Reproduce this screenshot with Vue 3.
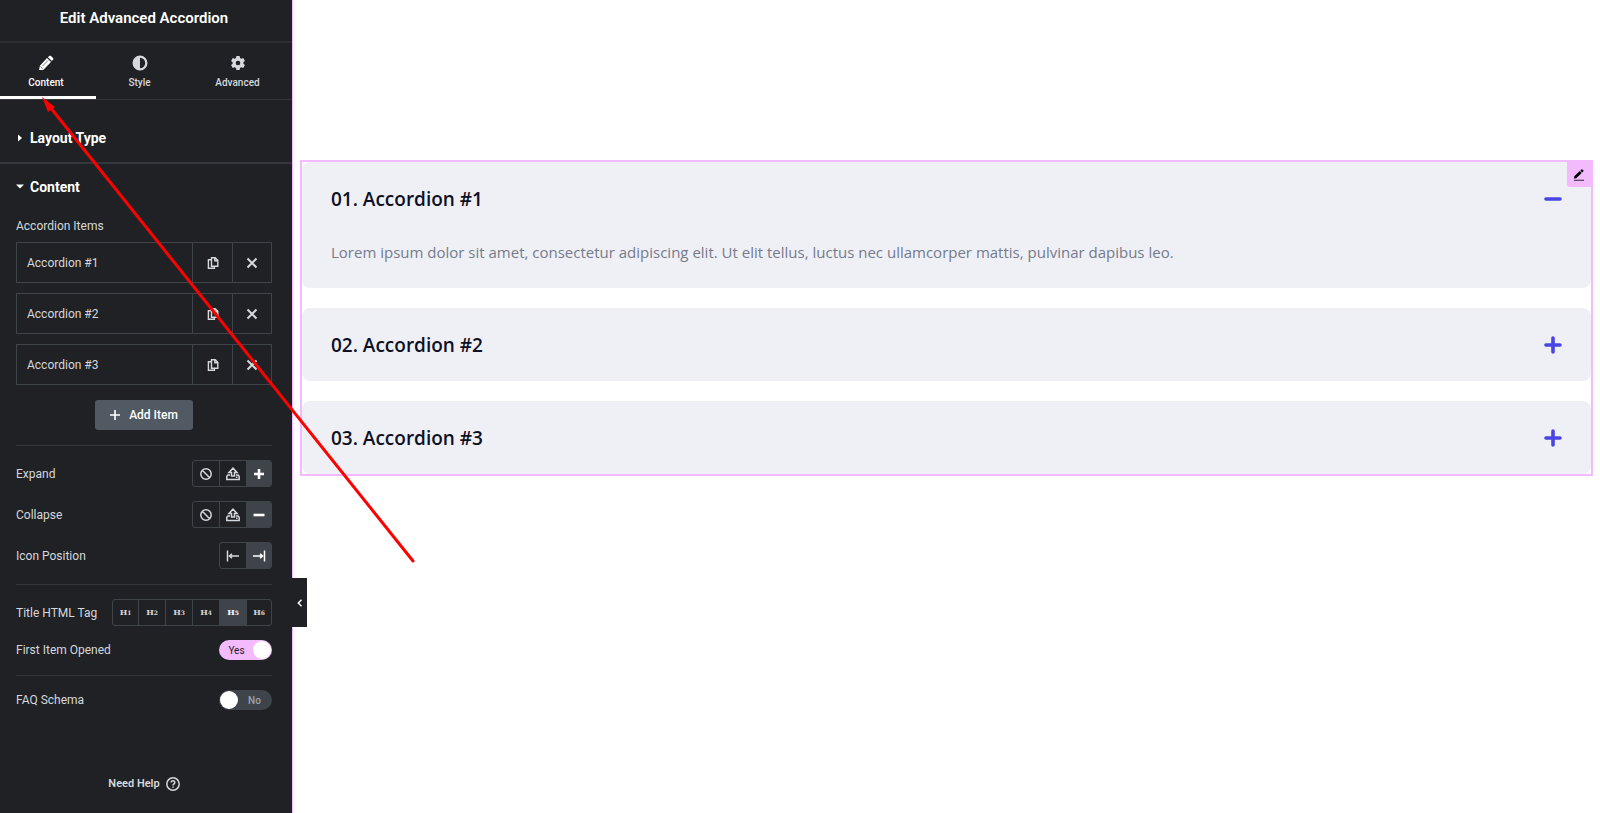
<template>
  <div class="editor">
    <aside class="panel">
      <header class="panel-header">
        <h1>Edit Advanced Accordion</h1>
      </header>

      <nav class="tabs">
        <button
          v-for="tab in tabs"
          :key="tab"
          type="button"
          class="tab"
          :class="{ active: activeTab === tab }"
          @click="activeTab = tab"
        >
          <svg v-if="tab === 'Content'" class="tab-icon" viewBox="0 0 16 16">
            <path d="M1 15l.9-4.200L9 3l4 4-7.800 7.900zM9.900 2.200l1.300-1.200c.5-.5 1.300-.5 1.800 0l2 2c.5.5.5 1.300 0 1.800l-1.200 1.300z" />
            <path class="cut" d="M4.500 11l5.500-5.500M2.500 11.500l2.200 2.200" />
          </svg>
          <svg v-else-if="tab === 'Style'" class="tab-icon" viewBox="0 0 16 16">
            <path fill-rule="evenodd" d="M8 .5a7.500 7.500 0 1 0 0 15 7.500 7.500 0 0 0 0-15zm0 2.300v10.400A5.200 5.200 0 0 0 8 2.800z" />
          </svg>
          <svg v-else class="tab-icon" viewBox="0 0 16 16">
            <path
              fill-rule="evenodd"
              d="M6.400 1h3.200l.4 2 1.300.8 2-.7 1.600 2.800L13.400 7.200v1.600l1.500 1.300-1.600 2.800-2-.7-1.300.8-.4 2H6.400l-.4-2-1.300-.8-2 .7-1.600-2.800 1.500-1.300V7.200L1.100 5.900l1.600-2.800 2 .7L6 3zM8 5.700a2.300 2.300 0 1 0 0 4.600 2.300 2.300 0 0 0 0-4.600z"
            />
          </svg>
          <span>{{ tab }}</span>
        </button>
      </nav>

      <section class="section section-closed">
        <button type="button" class="section-title">
          <svg class="caret" viewBox="0 0 8 8"><path d="M2 .5l4 3.500-4 3.500z" /></svg>
          Layout Type
        </button>
      </section>

      <section class="section">
        <button type="button" class="section-title">
          <svg class="caret" viewBox="0 0 8 8"><path d="M0 1.500h8L4 5.500z" /></svg>
          Content
        </button>

        <div class="controls">
          <p class="items-label">Accordion Items</p>
          <div class="repeater">
            <div v-for="item in items" :key="item.title" class="repeater-row">
              <button type="button" class="row-title">{{ item.title }}</button>
              <button type="button" class="row-tool" aria-label="Duplicate">
                <svg class="tool-icon" viewBox="0 0 12 12">
                  <path d="M4.500 .8h3.700l2.600 2.600v5.800H4.500zM7.800 1v2.800h2.800M4 2.800H1.400v8.400h6V9.500" />
                </svg>
              </button>
              <button type="button" class="row-tool" aria-label="Remove">
                <svg class="tool-icon cross" viewBox="0 0 12 12"><path d="M1.500 1.500l9 9M10.500 1.500l-9 9" /></svg>
              </button>
            </div>
          </div>
          <button type="button" class="add-item">
            <svg viewBox="0 0 10 10"><path d="M5 0v10M0 5h10" /></svg>
            Add Item
          </button>

          <div class="group">
            <div v-for="choice in choices" :key="choice.label" class="control" role="radiogroup" :aria-label="choice.label">
              <span class="control-label">{{ choice.label }}</span>
              <div class="choices">
                <label v-for="icon in choice.options" :key="icon" class="choice">
                  <input v-model="choice.value" type="radio" :name="choice.label" :value="icon" :aria-label="icon" />
                  <svg class="choice-icon" viewBox="0 0 14 14">
                    <path :class="{ heavy: icon === 'plus' || icon === 'minus' }" :d="iconPaths[icon]" />
                  </svg>
                </label>
              </div>
            </div>
          </div>

          <div class="group">
            <div class="control" role="radiogroup" aria-label="Title HTML Tag">
              <span class="control-label">Title HTML Tag</span>
              <div class="choices">
                <label v-for="n in 6" :key="n" class="choice heading">
                  <input v-model="titleTag" type="radio" name="title-tag" :value="n" />
                  H<small>{{ n }}</small>
                </label>
              </div>
            </div>
            <label class="control">
              <span class="control-label">First Item Opened</span>
              <span class="switch">
                <input v-model="firstOpened" type="checkbox" />
                <span class="switch-text">{{ firstOpened ? 'Yes' : 'No' }}</span>
                <span class="knob"></span>
              </span>
            </label>
          </div>

          <div class="group">
            <label class="control">
              <span class="control-label">FAQ Schema</span>
              <span class="switch">
                <input v-model="faqSchema" type="checkbox" />
                <span class="switch-text">{{ faqSchema ? 'Yes' : 'No' }}</span>
                <span class="knob"></span>
              </span>
            </label>
          </div>
        </div>
      </section>

      <a href="#" class="help">
        Need Help
        <svg viewBox="0 0 14 14">
          <circle cx="7" cy="7" r="6.200" />
          <path d="M5.200 5.500c0-2.400 3.600-2.300 3.600 0C8.800 6.800 7 6.900 7 8.400M7 9.600v1.200" />
        </svg>
      </a>

      <button type="button" class="collapse-panel" aria-label="Hide panel">
        <svg viewBox="0 0 8 8"><path d="M5.500 .8L2.300 4l3.200 3.200" /></svg>
      </button>
    </aside>

    <main class="preview">
      <div class="widget">
        <button type="button" class="edit-badge" aria-label="Edit">
          <svg viewBox="0 0 12 12">
            <path d="M1 9.500l.3-2.200L6.700 2l2 2L3.300 9.300zM7.300 1.500L8.500.400c.3-.3.6-.3.9 0l1 1c.3.3.3.6 0 .9L9.300 3.400z" />
            <path d="M1 10.800h10v.8H1z" />
          </svg>
        </button>
        <article v-for="(item, index) in items" :key="item.title" class="card">
          <h5>
            <button type="button" class="card-head" :aria-expanded="item.open" @click="item.open = !item.open">
              <span>0{{ index + 1 }}. {{ item.title }}</span>
              <svg class="sign" viewBox="0 0 18 18">
                <path :d="item.open ? 'M2 9h14' : 'M2 9h14M9 2v14'" />
              </svg>
            </button>
          </h5>
          <p v-if="item.open" class="card-text">{{ lorem }}</p>
        </article>
      </div>
    </main>

    <svg class="pointer" viewBox="0 0 420 570">
      <path class="shaft" d="M50 107L413 561" />
      <path class="head" d="M42 97L55 107L48 112z" />
    </svg>
  </div>
</template>

<script setup>
import { ref, reactive } from 'vue'

const tabs = ['Content', 'Style', 'Advanced']
const activeTab = ref('Content')

const lorem =
  'Lorem ipsum dolor sit amet, consectetur adipiscing elit. Ut elit tellus, luctus nec ullamcorper mattis, pulvinar dapibus leo.'

const items = reactive([
  { title: 'Accordion #1', open: true },
  { title: 'Accordion #2', open: false },
  { title: 'Accordion #3', open: false },
])

const choices = reactive([
  { label: 'Expand', options: ['none', 'upload', 'plus'], value: 'plus' },
  { label: 'Collapse', options: ['none', 'upload', 'minus'], value: 'minus' },
  { label: 'Icon Position', options: ['start', 'end'], value: 'end' },
])

const iconPaths = {
  none: 'M7 1.800a5.200 5.200 0 1 0 0 10.400A5.200 5.200 0 0 0 7 1.800zM3.300 3.300l7.400 7.400',
  upload: 'M5.500 9V5.500H3L7 1.200l4 4.300H8.500V9zM4 8H2L.8 9.200v3.200h12.400V9.200L12 8h-2M10 10.200h1.500',
  plus: 'M7 2v10M2 7h10',
  minus: 'M1.500 7h11',
  start: 'M1.500 1.500v11M13 7H3.500M6 4.800L3.500 7 6 9.200',
  end: 'M12.500 1.500v11M1 7h9.500M8 4.800L10.500 7 8 9.200',
}

const titleTag = ref(5)
const firstOpened = ref(true)
const faqSchema = ref(false)
</script>

<style>
body {
  margin: 0;
  background: #fff;
}
</style>

<style scoped>
* {
  box-sizing: border-box;
}

.editor {
  position: relative;
  display: flex;
  min-height: 100vh;
  font-family: Roboto, sans-serif;
  font-size: 12px;
  color: #d5d8dc;
}

button {
  padding: 0;
  border: 0;
  background: none;
  color: inherit;
  font: inherit;
  cursor: pointer;
}

h1,
h5,
p {
  margin: 0;
}

svg {
  display: block;
  flex: none;
  fill: currentColor;
}

.panel {
  position: relative;
  flex: none;
  display: flex;
  flex-direction: column;
  width: 293px;
  background: #1f2124;
  border-right: 1px solid #f3bafd;
}

.panel-header {
  height: 43px;
  padding-top: 8px;
  border-bottom: 2px solid #2c2e32;
  text-align: center;
}

h1 {
  padding-right: 4px;
  font-size: 15px;
  line-height: 20px;
  font-weight: 600;
  color: #fff;
}

.tabs {
  display: grid;
  grid-template-columns: 96fr 87fr 109fr;
  height: 57px;
  border-bottom: 1px solid #34383c;
}

.tab {
  display: flex;
  flex-direction: column;
  align-items: center;
  gap: 4px;
  padding-top: 12px;
  border-bottom: 3px solid transparent;
  font-size: 10px;
  line-height: 16px;
  font-weight: 500;
}

.tab.active {
  padding-right: 4px;
  border-color: #fff;
  color: #fff;
}

.tab-icon {
  width: 16px;
  height: 16px;
}

.cut {
  fill: none;
  stroke: #1f2124;
  stroke-width: 0.6;
}

.section-title {
  display: flex;
  align-items: center;
  gap: 6px;
  width: 100%;
  padding-left: 16px;
  font-size: 14px;
  line-height: 20px;
  font-weight: 700;
  color: #fff;
}

.section-closed {
  padding: 28px 0 14px;
  border-bottom: 2px solid #34383c;
}

.section-closed + .section {
  padding-top: 13px;
}

.caret {
  width: 8px;
  height: 8px;
}

.controls {
  display: flex;
  flex-direction: column;
  padding: 21px 20px 0 16px;
}

.items-label {
  line-height: 16px;
}

.repeater {
  display: flex;
  flex-direction: column;
  gap: 10px;
  padding: 8px 0 15px;
}

.repeater-row {
  display: grid;
  grid-template-columns: 1fr 40px 39px;
  height: 41px;
  border: 1px solid #3f444b;
}

.row-title {
  padding-left: 10px;
  text-align: left;
}

.row-tool {
  display: grid;
  place-items: center;
  border-left: 1px solid #3f444b;
}

.tool-icon {
  width: 12px;
  height: 12px;
  fill: none;
  stroke: currentColor;
  stroke-width: 1.4;
}

.cross {
  stroke-width: 2;
}

.add-item {
  display: flex;
  align-items: center;
  justify-content: center;
  gap: 9px;
  align-self: center;
  width: 98px;
  height: 30px;
  border-radius: 3px;
  background: #515962;
  color: #fff;
  font-weight: 500;
}

.add-item svg {
  width: 10px;
  height: 10px;
  stroke: currentColor;
  stroke-width: 1.6;
}

.group {
  display: flex;
  flex-direction: column;
  gap: 14px;
  margin-top: 15px;
  padding-top: 14px;
  border-top: 1px solid #34383c;
}

.control {
  display: flex;
  align-items: center;
  justify-content: space-between;
}

.choices {
  display: flex;
  border: 1px solid #3f444b;
  border-radius: 3px;
  overflow: hidden;
}

.choice {
  position: relative;
  display: grid;
  place-items: center;
  width: 26px;
  height: 25px;
  cursor: pointer;
}

.choice + .choice {
  width: 27px;
  border-left: 1px solid #3f444b;
}

.choice + .choice:last-child {
  width: 25px;
}

.choice input,
.switch input {
  position: absolute;
  inset: 0;
  margin: 0;
  opacity: 0;
  cursor: pointer;
}

.choice:has(input:checked) {
  background: #3f444b;
  color: #fff;
}

.choice-icon {
  width: 14px;
  height: 14px;
  fill: none;
  stroke: currentColor;
  stroke-width: 1.5;
}

.heavy {
  stroke-width: 2.6;
}

.heading {
  display: flex;
  align-items: baseline;
  justify-content: center;
  font: 700 8px/25px 'DejaVu Serif', serif;
}

.heading:first-child {
  width: 25px;
}

.heading small {
  font-size: 6px;
}

.switch {
  position: relative;
  display: flex;
  align-items: center;
  flex-direction: row-reverse;
  width: 53px;
  height: 20px;
  padding: 0 1px;
  border-radius: 10px;
  background: #3f444b;
  color: #9da5ae;
  font-size: 10px;
  font-weight: 500;
}

.switch:has(input:checked) {
  flex-direction: row;
  background: #f3bafd;
  color: #1f2124;
  font-weight: 400;
}

.switch-text {
  flex: 1;
  text-align: center;
}

.knob {
  flex: none;
  width: 18px;
  height: 18px;
  border-radius: 50%;
  background: #fff;
}

.help {
  display: flex;
  align-items: center;
  justify-content: center;
  gap: 6px;
  margin-top: auto;
  padding: 0 4px 21px 0;
  font-size: 11px;
  line-height: 16px;
  font-weight: 600;
  color: #d5d8dc;
  text-decoration: none;
}

.help svg {
  width: 14px;
  height: 14px;
  fill: none;
  stroke: currentColor;
  stroke-width: 1.5;
}

.collapse-panel {
  position: absolute;
  left: 100%;
  top: 578px;
  display: grid;
  place-items: center;
  width: 15px;
  height: 49px;
  background: #1f2124;
}

.collapse-panel::before {
  content: '';
  position: absolute;
  right: 100%;
  width: 1px;
  height: 100%;
  background: #1f2124;
}

.collapse-panel svg {
  width: 8px;
  height: 8px;
  fill: none;
  stroke: #fff;
  stroke-width: 1.4;
}

.preview {
  flex: 1;
  min-width: 0;
  padding: 160px 7px 0;
  font-family: 'Segoe UI', 'Open Sans', sans-serif;
}

.widget {
  position: relative;
  display: flex;
  flex-direction: column;
  gap: 20px;
  border: 2px solid #f3bafd;
}

.edit-badge {
  position: absolute;
  top: 0;
  right: 0;
  display: grid;
  place-items: center;
  width: 24px;
  height: 25px;
  border-radius: 0 0 0 3px;
  background: #f3bafd;
  color: #000;
}

.edit-badge svg {
  width: 12px;
  height: 12px;
}

.card {
  border-radius: 8px;
  background: #eff0f6;
}

.card-head {
  display: flex;
  align-items: center;
  justify-content: space-between;
  width: 100%;
  height: 73px;
  padding: 0 29px;
  font-size: 19px;
  font-weight: 600;
  color: #0e1025;
}

.sign {
  width: 18px;
  height: 18px;
  stroke: #4a44e4;
  stroke-width: 3.6;
  stroke-linecap: round;
}

.card-text {
  padding: 5px 29px 24px;
  font-size: 15px;
  line-height: 24px;
  color: #757b8a;
}

.pointer {
  position: absolute;
  top: 0;
  left: 0;
  width: 420px;
  height: 570px;
  pointer-events: none;
}

.shaft {
  stroke: #f00;
  stroke-width: 3;
  stroke-linecap: round;
}

.head {
  fill: #f00;
}
</style>
